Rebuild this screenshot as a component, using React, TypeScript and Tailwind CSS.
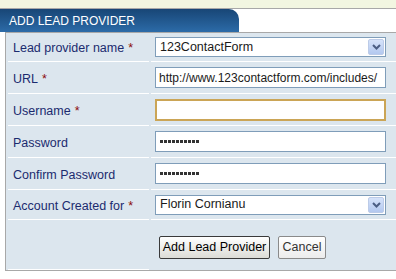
const font = "font-['Liberation_Sans',Arial,sans-serif]";

function Req() {
  return <span className="text-[#8b0a0a] ml-[4px]">*</span>;
}

function SelectBox({ value }: { value: string }) {
  return (
    <div className="w-[231px] h-[20px] bg-white border border-[#7f9db9] flex items-center justify-between pl-[4px] pr-[1px]">
      <span className="text-[12.5px] text-[#1a1a1a] leading-none">{value}</span>
      <div className="w-[16px] h-[16px] rounded-[2px] bg-linear-to-b from-[#d6e3fa] to-[#b3c8ef] border border-[#bccbe8] flex items-center justify-center">
        <svg width="9" height="6" viewBox="0 0 9 6">
          <path d="M1 1 L4.5 4.5 L8 1" fill="none" stroke="#4b5e84" strokeWidth="2" />
        </svg>
      </div>
    </div>
  );
}

function TextBox({ value, focused }: { value?: string; focused?: boolean }) {
  return (
    <div
      className={
        focused
          ? "w-[231px] h-[22px] bg-white border-2 border-[#cba556] flex items-center pl-[4px]"
          : "w-[231px] h-[21px] bg-white border border-[#7f9db9] flex items-center pl-[3px] overflow-hidden"
      }
    >
      <span className="text-[12px] text-[#1a1a1a] leading-none whitespace-nowrap">{value}</span>
    </div>
  );
}

function PasswordBox() {
  return (
    <div className="w-[231px] h-[21px] bg-white border border-[#7f9db9] flex items-center pl-[4px] gap-[1px]">
      {Array.from({ length: 10 }).map((_, i) => (
        <span key={i} className="w-[3px] h-[3px] bg-[#333]" />
      ))}
    </div>
  );
}

function Row({
  label,
  required,
  h,
  children,
}: {
  label?: string;
  required?: boolean;
  h: string;
  children: React.ReactNode;
}) {
  return (
    <div className={`flex gap-[2px] ${h}`}>
      <div className="w-[141px] ml-[2px] border-b border-white flex items-center pl-[5px] pt-[3px] text-[12.5px] text-[#1b2b6e]">
        {label}
        {required && <Req />}
      </div>
      <div className="flex-1 border-b border-white flex items-center pl-[4px]">{children}</div>
    </div>
  );
}

export default function App() {
  return (
    <div className={`w-[396px] h-[279px] bg-white overflow-hidden ${font}`}>
      <div className="h-[8px] bg-[#f2f6e1]" />
      <div className="h-[24px] border-t border-[#a8a8a8] flex">
        <div className="w-[239px] rounded-tr-[10px] bg-linear-to-b from-[#184676] to-[#2c6ba8] text-white text-[12px] pl-[9px] flex items-center">
          ADD LEAD PROVIDER
        </div>
        <div className="flex-1 bg-white" />
      </div>
      <div className="ml-[5px] border-t border-l border-b border-[#a8a8a8] bg-[#dce6ee]">
        <Row label="Lead provider name" required h="h-[29px]">
          <SelectBox value="123ContactForm" />
        </Row>
        <Row label="URL" required h="h-[32px]">
          <TextBox value="http://www.123contactform.com/includes/" />
        </Row>
        <Row label="Username" required h="h-[32px]">
          <TextBox focused />
        </Row>
        <Row label="Password" h="h-[32px]">
          <PasswordBox />
        </Row>
        <Row label="Confirm Password" h="h-[32px]">
          <PasswordBox />
        </Row>
        <Row label="Account Created for" required h="h-[30px]">
          <SelectBox value="Florin Cornianu" />
        </Row>
        <div className="flex gap-[2px] h-[50px]">
          <div className="w-[141px] ml-[2px] border-b border-white" />
          <div className="flex-1 flex items-start pt-[16px] pl-[8px] gap-[8px]">
            <button className="h-[23px] w-[111px] border border-[#3a3a3a] rounded-[2px] bg-linear-to-b from-white to-[#dcdcd6] text-[12.5px] text-black leading-none">
              Add Lead Provider
            </button>
            <button className="h-[23px] w-[48px] border border-[#8a8a8a] rounded-[2px] bg-linear-to-b from-white to-[#ececec] text-[12.5px] text-[#333] leading-none">
              Cancel
            </button>
          </div>
        </div>
      </div>
    </div>
  );
}
